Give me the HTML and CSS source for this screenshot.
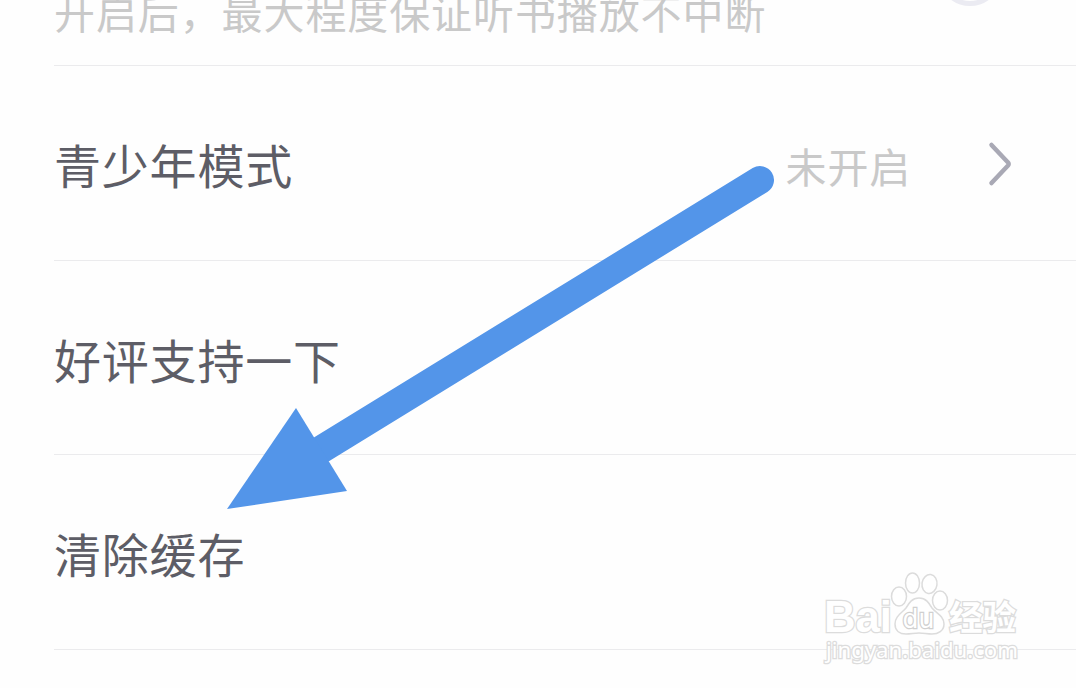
FILE: index.html
```html
<!DOCTYPE html>
<html lang="zh-CN">
<head>
<meta charset="utf-8">
<title>设置</title>
<link rel="stylesheet" href="styles.css">
</head>
<body>
<main class="settings">
  <section class="row row-first">
    <p class="hint">开启后，最大程度保证听书播放不中断</p>
    <span class="toggle-knob"></span>
  </section>
  <section class="row">
    <h2 class="label">青少年模式</h2>
    <div class="state">
      <span class="value">未开启</span>
      <svg class="chevron" width="28" height="48" viewBox="0 0 28 48"><path d="M5.500 6 22 23.500a2 2 0 0 1 0 3L5.500 44"/></svg>
    </div>
  </section>
  <section class="row"><h2 class="label">好评支持一下</h2></section>
  <section class="row"><h2 class="label">清除缓存</h2></section>
</main>
<svg class="arrow" width="1076" height="688" viewBox="0 0 1076 688">
  <path class="shaft" d="M760 180 322 449"/>
  <path class="head" d="M227 509 296 408 347 491Z"/>
</svg>
<svg class="watermark" width="240" height="128" viewBox="0 0 240 128">
  <g class="outline">
    <text class="brand" x="24" y="72" textLength="68" lengthAdjust="spacingAndGlyphs">Bai</text>
    <ellipse cx="99" cy="36.500" rx="7.500" ry="9.500"/>
    <ellipse cx="112.500" cy="23" rx="7" ry="10"/>
    <ellipse cx="129.500" cy="24" rx="7.500" ry="9.500" transform="rotate(8 129.500 24)"/>
    <ellipse cx="140" cy="40.500" rx="7.500" ry="9.500"/>
    <path d="M119 38c-7 0-10 5-13 10-4 5-11 8-11 16 0 7 5 10 11 10 5 0 8-1 13-1s8 1 13 1c6 0 12-3 12-10 0-8-8-11-12-16-3-5-6-10-13-10Z"/>
    <text class="du" x="102.500" y="68" textLength="32" lengthAdjust="spacingAndGlyphs">du</text>
    <text class="cn" x="149" y="70" textLength="67" lengthAdjust="spacingAndGlyphs">经验</text>
    <text class="url" x="26" y="98" textLength="192" lengthAdjust="spacingAndGlyphs">jingyan.baidu.com</text>
  </g>
</svg>
</body>
</html>
```
FILE: styles.css
```css
body {
  margin: 0;
  height: 688px;
  overflow: hidden;
  position: relative;
  background: #fefefe;
  font-family: "Noto Sans CJK SC", sans-serif;
}
.settings { padding-left: 54px; }
.row {
  box-sizing: border-box;
  height: 194.500px;
  border-bottom: 1px solid #ebebed;
  display: flex;
  align-items: center;
  justify-content: space-between;
}
.row-first {
  height: 66px;
  align-items: flex-start;
}
.hint {
  margin: -10px 0 0;
  font-size: 41px;
  letter-spacing: 0.900px;
  line-height: 42px;
  color: #c9c9c9;
  white-space: nowrap;
}
.toggle-knob {
  box-sizing: border-box;
  width: 64px;
  height: 64px;
  margin: -58px 74px 0 0;
  border: 5px solid #ebebf2;
  border-radius: 50%;
}
.label {
  margin: 0;
  padding-top: 3px;
  font-size: 47px;
  letter-spacing: 0.800px;
  font-weight: 400;
  line-height: 60px;
  color: #5d5d66;
}
.state {
  display: flex;
  align-items: center;
  gap: 75px;
  margin-right: 62px;
}
.value {
  padding-top: 4px;
  font-size: 41px;
  letter-spacing: 0.800px;
  line-height: 60px;
  color: #c9c9c9;
}
.chevron {
  fill: none;
  stroke: #a9a9b5;
  stroke-width: 4.500;
  stroke-linecap: round;
}
.arrow {
  position: absolute;
  left: 0;
  top: 0;
}
.shaft {
  stroke: #5395e9;
  stroke-width: 28;
  stroke-linecap: round;
}
.head { fill: #5395e9; }
.watermark {
  position: absolute;
  left: 800px;
  top: 560px;
}
.outline {
  fill: #fff;
  stroke: #dcdcdc;
  stroke-width: 1.500;
}
.outline text { paint-order: stroke; stroke-width: 2.600; }
.brand {
  font: bold 45px "Liberation Sans", sans-serif;
}
.outline .du {
  font: 27px "DejaVu Sans", sans-serif;
  stroke: #d0d0d0;
}
.cn { font: 700 34px "Noto Sans CJK SC", sans-serif; }
.url { font: 22px "Noto Sans", sans-serif; }
```
